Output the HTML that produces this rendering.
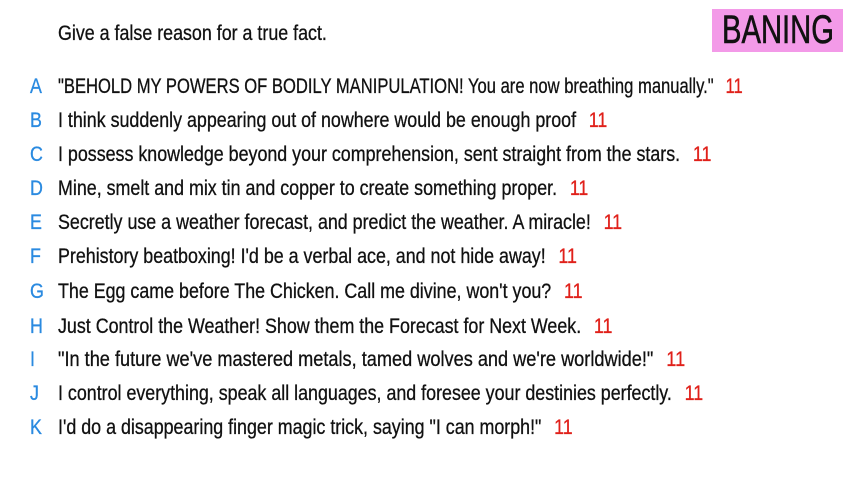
<!DOCTYPE html>
<html><head><meta charset="utf-8"><style>
body{margin:0;width:853px;height:480px;background:#fff;position:relative;overflow:hidden;font-family:"Liberation Sans",sans-serif;}
.t{position:absolute;left:58px;top:22px;font-size:21px;color:#111;transform:scaleX(0.85);transform-origin:left center;white-space:nowrap;-webkit-text-stroke:0.3px #111;}
.b{position:absolute;left:712px;top:9px;width:131px;height:43px;background:#f39ae8;}
.b span{position:absolute;left:10px;top:0;font-size:40px;line-height:43px;color:#111;transform:scaleX(0.73);transform-origin:left center;white-space:nowrap;-webkit-text-stroke:0.6px #111;}
.r{position:absolute;left:0;font-size:21px;color:#111;white-space:nowrap;height:26px;line-height:26px;-webkit-text-stroke:0.3px;}
.r .l{position:absolute;left:30px;color:#2a8ae0;transform:scaleX(0.85);transform-origin:left center;}
.r .x{position:absolute;left:58px;transform:scaleX(0.85);transform-origin:left center;}
.n{color:#e0201a;margin-left:15px;}
</style></head><body>
<div class="t">Give a false reason for a true fact.</div>
<div class="b"><span>BANING</span></div>
<div class="r" style="top:74px"><span class="l">A</span><span class="x" style="transform:scaleX(0.79)">"BEHOLD MY POWERS OF BODILY MANIPULATION! You are now breathing manually."<span class="n">11</span></span></div>
<div class="r" style="top:108px"><span class="l">B</span><span class="x">I think suddenly appearing out of nowhere would be enough proof<span class="n">11</span></span></div>
<div class="r" style="top:142px"><span class="l">C</span><span class="x">I possess knowledge beyond your comprehension, sent straight from the stars.<span class="n">11</span></span></div>
<div class="r" style="top:176px"><span class="l">D</span><span class="x">Mine, smelt and mix tin and copper to create something proper.<span class="n">11</span></span></div>
<div class="r" style="top:210px"><span class="l">E</span><span class="x">Secretly use a weather forecast, and predict the weather. A miracle!<span class="n">11</span></span></div>
<div class="r" style="top:244px"><span class="l">F</span><span class="x">Prehistory beatboxing! I'd be a verbal ace, and not hide away!<span class="n">11</span></span></div>
<div class="r" style="top:279px"><span class="l">G</span><span class="x">The Egg came before The Chicken. Call me divine, won't you?<span class="n">11</span></span></div>
<div class="r" style="top:314px"><span class="l">H</span><span class="x">Just Control the Weather! Show them the Forecast for Next Week.<span class="n">11</span></span></div>
<div class="r" style="top:347px"><span class="l">I</span><span class="x" style="transform:scaleX(0.865)">"In the future we've mastered metals, tamed wolves and we're worldwide!"<span class="n">11</span></span></div>
<div class="r" style="top:381px"><span class="l">J</span><span class="x">I control everything, speak all languages, and foresee your destinies perfectly.<span class="n">11</span></span></div>
<div class="r" style="top:415px"><span class="l">K</span><span class="x">I'd do a disappearing finger magic trick, saying "I can morph!"<span class="n">11</span></span></div>
</body></html>
